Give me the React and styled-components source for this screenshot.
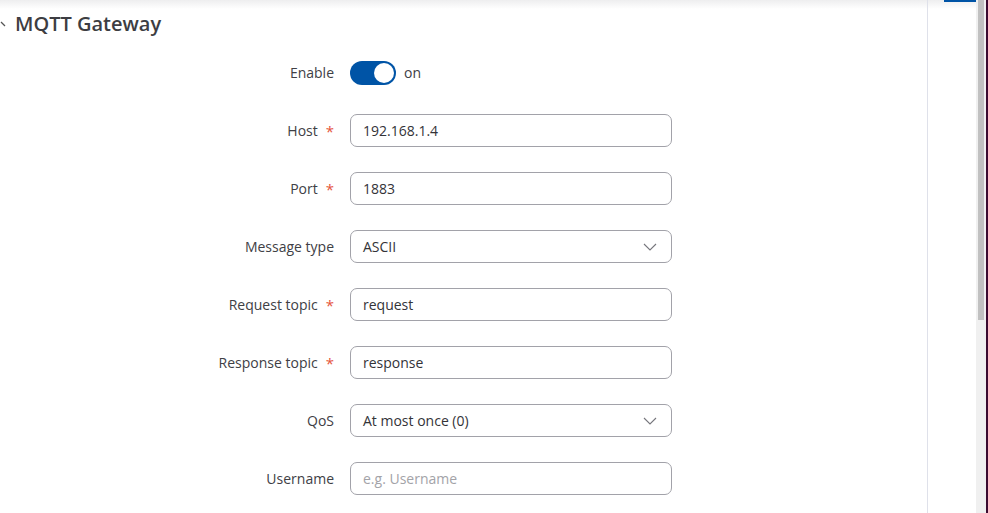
import React from 'react'
import styled, { createGlobalStyle } from 'styled-components'

const GlobalStyle = createGlobalStyle`
  html, body {
    margin: 0;
    padding: 0;
    background: #fff;
    font-family: "Open Sans", "Liberation Sans", sans-serif;
    overflow: hidden;
  }
`

const Screen = styled.div`
  display: flex;
  width: 988px;
  height: 513px;
  overflow: hidden;
  background: linear-gradient(#eeeeef 0, #ffffff 9px);
`

const Main = styled.div`
  flex: 0 0 927px;
  border-right: 1px solid #dfe1ea;
  display: flex;
  flex-direction: column;
`

const Side = styled.div`
  flex: 1;
  display: flex;
`

const SidePanel = styled.div`
  flex: 1;
  display: flex;
  justify-content: flex-end;
  align-items: flex-start;
`

const ActiveTab = styled.div`
  width: 32px;
  height: 2px;
  background: #0054a6;
`

const Scrollbar = styled.div`
  width: 10px;
  background: #f0f0f0;
  display: flex;
  justify-content: center;
`

const Thumb = styled.div`
  width: 6px;
  height: 320px;
  background: #c1c1c1;
`

const Edge = styled.div`
  width: 2px;
  background: #3b0b30;
`

const Header = styled.div`
  display: flex;
  align-items: center;
  height: 27px;
  margin-top: 10px;
`

const Caret = styled.svg`
  width: 15px;
  height: 27px;
  flex: 0 0 15px;
`

const Title = styled.h2`
  margin: 0;
  font-size: 20px;
  font-weight: 600;
  color: #3d3d42;
  line-height: 27px;
`

const Form = styled.div`
  display: flex;
  flex-direction: column;
  gap: 25px;
  padding-top: 19px;
`

const Row = styled.div`
  display: flex;
  align-items: center;
  min-height: 33px;
`

const Label = styled.div`
  width: 334px;
  display: flex;
  justify-content: flex-end;
  align-items: center;
  font-size: 14px;
  color: #404045;
  margin-right: 16px;
`

const Required = styled.span`
  color: #e5533d;
  margin-left: 8px;
  font-size: 15px;
`

const Field = styled.div`
  box-sizing: border-box;
  width: 322px;
  height: 33px;
  border: 1px solid #a2a2a9;
  border-radius: 7px;
  padding: 0 12px;
  display: flex;
  align-items: center;
  justify-content: space-between;
  font-size: 14px;
  color: ${p => (p.$placeholder ? '#a3a3a8' : '#333338')};
`

const Chevron = styled.svg`
  width: 14px;
  height: 8px;
  margin-right: 2px;
`

const Switch = styled.div`
  width: 46px;
  height: 24px;
  border-radius: 12px;
  background: #0054a6;
  display: flex;
  align-items: center;
  justify-content: flex-end;
  padding: 0 2px;
  box-sizing: border-box;
`

const Knob = styled.div`
  width: 20px;
  height: 20px;
  border-radius: 50%;
  background: #fff;
`

const SwitchText = styled.span`
  margin-left: 8px;
  font-size: 14px;
  color: #404045;
`

const fields = [
  { label: 'Host', required: true, value: '192.168.1.4' },
  { label: 'Port', required: true, value: '1883' },
  { label: 'Message type', value: 'ASCII', select: true },
  { label: 'Request topic', required: true, value: 'request' },
  { label: 'Response topic', required: true, value: 'response' },
  { label: 'QoS', value: 'At most once (0)', select: true },
  { label: 'Username', value: 'e.g. Username', placeholder: true },
]

const App = () => {
  return (
    <Screen>
      <GlobalStyle />
      <Main>
        <Header>
          <Caret viewBox="0 0 15 27">
            <path d="M1 12 L5 16" stroke="#555" strokeWidth="1.2" fill="none" />
          </Caret>
          <Title>MQTT Gateway</Title>
        </Header>
        <Form>
          <Row>
            <Label>Enable</Label>
            <Switch>
              <Knob />
            </Switch>
            <SwitchText>on</SwitchText>
          </Row>
          {fields.map(f => (
            <Row key={f.label}>
              <Label>
                {f.label}
                {f.required && <Required>*</Required>}
              </Label>
              <Field $placeholder={f.placeholder}>
                {f.value}
                {f.select && (
                  <Chevron viewBox="0 0 14 8">
                    <path d="M1 1 L7 7 L13 1" stroke="#76767c" strokeWidth="1.1" fill="none" />
                  </Chevron>
                )}
              </Field>
            </Row>
          ))}
        </Form>
      </Main>
      <Side>
        <SidePanel>
          <ActiveTab />
        </SidePanel>
        <Scrollbar>
          <Thumb />
        </Scrollbar>
        <Edge />
      </Side>
    </Screen>
  )
}

export default App
